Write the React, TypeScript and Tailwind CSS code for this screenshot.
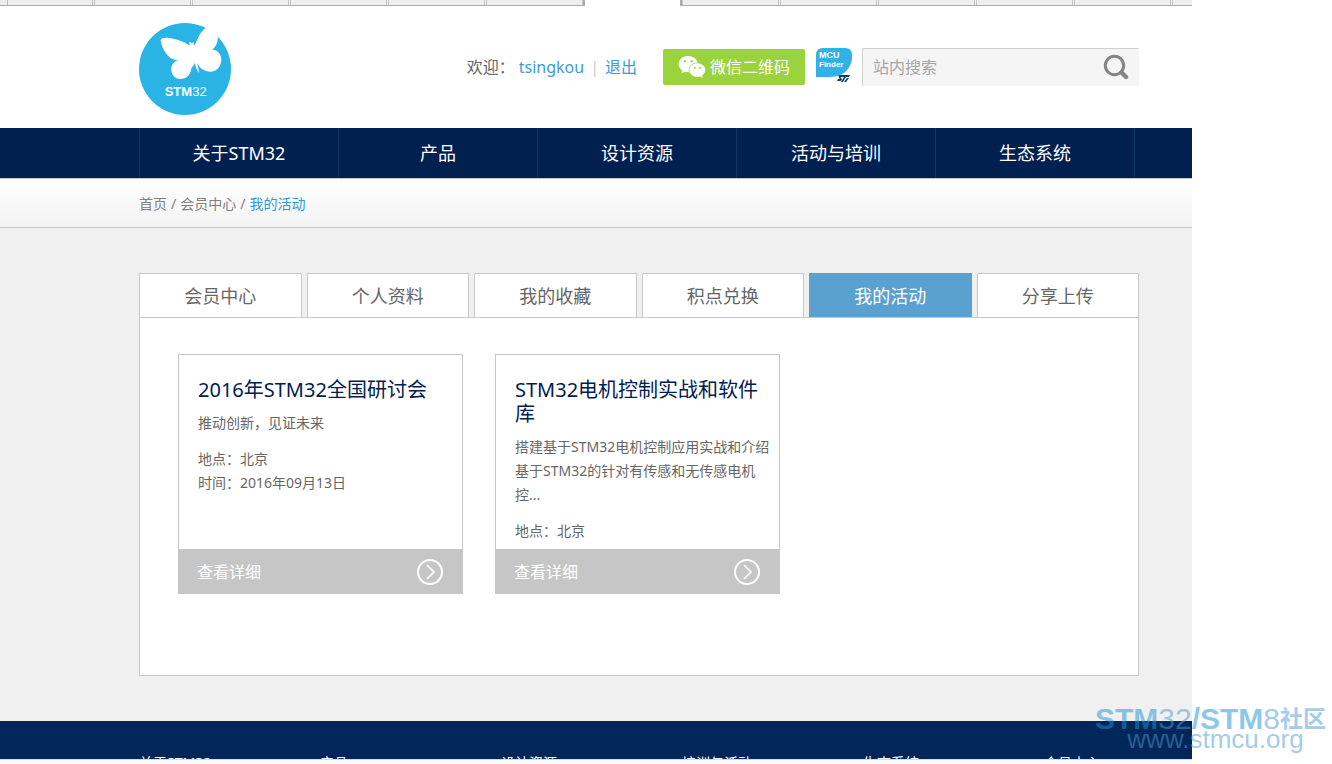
import React from 'react';
import { FaWeixin } from 'react-icons/fa';

const navItems = ['关于STM32', '产品', '设计资源', '活动与培训', '生态系统'];

const memberTabs = ['会员中心', '个人资料', '我的收藏', '积点兑换', '我的活动', '分享上传'];

const footerItems = ['关于STM32', '产品', '设计资源', '培训与活动', '生态系统', '会员中心'];

const events = [
  {
    title: '2016年STM32全国研讨会',
    desc: '推动创新，见证未来',
    place: '北京',
    date: '2016年09月13日',
  },
  {
    title: 'STM32电机控制实战和软件库',
    desc: '搭建基于STM32电机控制应用实战和介绍基于STM32的针对有传感和无传感电机控...',
    place: '北京',
    date: '',
  },
];

const Logo = () => (
  <svg viewBox="27 39 276 276" className="size-[92px]" aria-label="STM32">
    <circle cx="165" cy="177" r="138" fill="#2ab4e6" />
    <path
      fill="#fff"
      d="M92 91C93 83 104 82 118 84C143 88 165 96 178 107C179 103 179 99 177 96C181 95 184 97 185 101C188 97 190 97 192 97C190 100 190 103 193 106C200 96 203 84 209 74C215 64 222 58 229 52L238 36L290 50L263 80C264 93 260 108 247 119C263 119 274 132 274 150C272 172 260 185 241 185C222 184 208 173 200 158C204 168 207 179 206 189C201 181 197 171 194 159C192 164 188 170 184 175C182 194 170 207 151 207C132 206 122 191 124 174C125 162 133 153 146 150C134 151 122 146 115 138C102 125 93 105 92 91Z"
    />
    <text
      x="167"
      y="257"
      textAnchor="middle"
      fill="#fff"
      fontSize="39"
      fontFamily="'Liberation Sans Narrow', 'Liberation Sans', sans-serif"
    >
      <tspan fontWeight="700">STM</tspan>
      <tspan>32</tspan>
    </text>
  </svg>
);

const McuFinder = () => (
  <svg viewBox="0 0 37 38" className="h-[38px] w-[37px]">
    <path d="M1 7Q1 0 8 0H30Q37 0 37 7V11Q34 29 13 29H1Z" fill="#2fb2e8" />
    <g fill="#fff" fontFamily="'Liberation Sans', sans-serif" fontWeight="700" fontSize="8">
      <text x="4" y="10" fontSize="9">MCU</text>
      <text x="4" y="19">Finder</text>
    </g>
    <path
      d="M24 27H35L34 29H31L28 34H26L29 29H26Q25 29 26 30L27 31Q27 33 25 33H22L23 31H25L24 30Q23 28 24 27ZM32 30H34L31 34H29Z"
      fill="#0d3f70"
    />
  </svg>
);

const ArrowIcon = () => (
  <svg viewBox="0 0 26 26" className="size-[26px]" fill="none" stroke="#fff">
    <circle cx="13" cy="13" r="12" strokeWidth="2" />
    <path d="M10 6L17 13L10 20" strokeWidth="1.6" />
  </svg>
);

// Slice of the old sub menu that stays visible above the header
const TopStrip = () => (
  <div className="flex h-[6px] overflow-hidden">
    <div className="flex w-[585px] border-r-2 border-b border-[#acacac] bg-[#eee]">
      <span className="w-2 border-r border-[#bbb]" />
      <span className="w-[85px] border-r border-[#bbb]" />
      {[1, 2, 3, 4, 5].map((n) => (
        <span key={n} className="ml-px w-[97px] border-x border-[#c4c4c4]" />
      ))}
    </div>
    <div className="w-[95px]" />
    <div className="flex flex-1 border-b border-l-2 border-[#acacac] bg-[#eee]">
      {[1, 2, 3, 4, 5].map((n) => (
        <span key={n} className="mr-px w-[97px] border-x border-[#c4c4c4]" />
      ))}
      <span className="flex-1 border-l border-[#c4c4c4]" />
    </div>
  </div>
);

const EventCard = ({ event }: { event: (typeof events)[number] }) => (
  <article className="flex h-[240px] w-[285px] flex-col border border-[#c6c6c6] border-b-0 bg-white">
    <div className="flex-1 overflow-hidden pt-[23px] pr-[5px] pl-[19px] text-sm leading-6 text-[#666]">
      <h2 className="mb-[9px] text-xl leading-6 text-[#002052]">{event.title}</h2>
      <p className="mb-3">{event.desc}</p>
      <p>地点：{event.place}</p>
      {event.date && <p>时间：{event.date}</p>}
    </div>
    <a
      href="#detail"
      className="flex h-[45px] shrink-0 items-center justify-between bg-[#c6c6c6] pr-[19px] pl-[18px] text-base text-white"
    >
      查看详细
      <ArrowIcon />
    </a>
  </article>
);

const App = () => {
  return (
    <div className="relative overflow-hidden bg-white pr-[140px] font-['Noto_Sans','Noto_Sans_CJK_SC',sans-serif]">
      <TopStrip />

      <header className="flex items-start justify-between pt-[17px] pr-[53px] pb-[13px] pl-[139px]">
        <a href="#home">
          <Logo />
        </a>
        <div className="mt-[25px] flex h-[38px] items-center">
          <div className="flex items-center text-base whitespace-nowrap text-[#666]">
            <span>欢迎：</span>
            <a href="#user" className="ml-1 text-[#3f9bd4]">tsingkou</a>
            <span className="mx-[6px] text-[#ccc]">|</span>
            <a href="#logout" className="text-[#3f9bd4]">退出</a>
          </div>
          <button
            type="button"
            className="ml-[26px] flex h-9 w-[142px] items-center justify-center gap-1 rounded-xs bg-[#9bd33c] text-base whitespace-nowrap text-white"
          >
            <FaWeixin size={28} />
            微信二维码
          </button>
          <a href="#mcu-finder" className="ml-[10px]">
            <McuFinder />
          </a>
          <form className="ml-[10px] flex h-[38px] w-[277px] items-center rounded-xs border-t border-l border-[#d0d0d0] bg-[#f5f5f5] pr-[10px] pb-px">
            <input
              type="text"
              aria-label="站内搜索"
              placeholder="站内搜索"
              className="min-w-0 flex-1 bg-transparent pl-[10px] text-base text-[#666] outline-none placeholder:text-[#a6a6a6]"
            />
            <button type="button" aria-label="搜索">
              <svg viewBox="0 0 26 26" className="size-[26px]" fill="none" stroke="#858585">
                <circle cx="11.5" cy="11.5" r="9.2" strokeWidth="3" />
                <path d="M18.5 18.5L23 23" strokeWidth="4.4" strokeLinecap="round" />
              </svg>
            </button>
          </form>
        </div>
      </header>

      <nav className="bg-[#002050] pr-[53px] pl-[139px]">
        <ul className="flex h-[50px] border-l border-[#0b3766] pr-1">
          {navItems.map((item) => (
            <li key={item} className="flex-1 border-r border-[#0b3766]">
              <a href="#nav" className="flex h-full items-center justify-center text-lg text-white">
                {item}
              </a>
            </li>
          ))}
        </ul>
      </nav>

      <div className="flex h-[50px] items-center gap-1 border-y border-[#c9c9c9] bg-linear-to-b from-white to-[#f3f3f3] pt-[2px] pl-[139px] text-sm text-[#808080]">
        <a href="#home">首页</a>
        <span>/</span>
        <a href="#member">会员中心</a>
        <span>/</span>
        <a href="#events" className="text-[#2e9bd6]">我的活动</a>
      </div>

      <main className="bg-[#f0f0f0] pt-[45px] pr-[53px] pb-[45px] pl-[139px]">
        <div className="flex gap-[5px]">
          {memberTabs.map((tab) => (
            <a
              key={tab}
              href="#tab"
              className={
                tab === '我的活动'
                  ? 'flex h-11 flex-1 items-center justify-center border border-b-0 border-[#5aa1d0] bg-[#5aa1d0] text-lg text-white'
                  : 'flex h-11 flex-1 items-center justify-center border border-b-0 border-[#c9c9c9] bg-white text-lg text-[#666]'
              }
            >
              {tab}
            </a>
          ))}
        </div>
        <section className="flex gap-8 border border-[#c9c9c9] bg-white px-[38px] pt-9 pb-[81px]">
          {events.map((event) => (
            <EventCard key={event.title} event={event} />
          ))}
        </section>
      </main>

      <footer>
        <div className="grid h-[38px] grid-cols-6 gap-[86px] overflow-hidden bg-[#00265a] pt-8 pr-[53px] pl-[139px] text-sm whitespace-nowrap text-white">
          {footerItems.map((item) => (
            <span key={item}>{item}</span>
          ))}
        </div>
        <div className="h-[5px] border-t border-[#d9d9d9] bg-[#f9f9f9]" />
      </footer>

      {/* site mark over the bottom right corner */}
      <div className="absolute right-[6px] bottom-4 flex flex-col items-center font-['Liberation_Sans','Noto_Sans_CJK_SC',sans-serif] whitespace-nowrap text-[#4d9bd3] opacity-50">
        <div className="flex items-center text-3xl leading-[22px]">
          <b className="text-[#1d93d7]">STM</b>
          <span>32</span>
          <b className="text-[#1d93d7]">/STM</b>
          <span>8</span>
          <b className="text-[23px] leading-[22px]">社区</b>
        </div>
        <div className="pl-[10px] text-[26px] leading-[18px]">www.stmcu.org</div>
      </div>
    </div>
  );
};

export default App;
